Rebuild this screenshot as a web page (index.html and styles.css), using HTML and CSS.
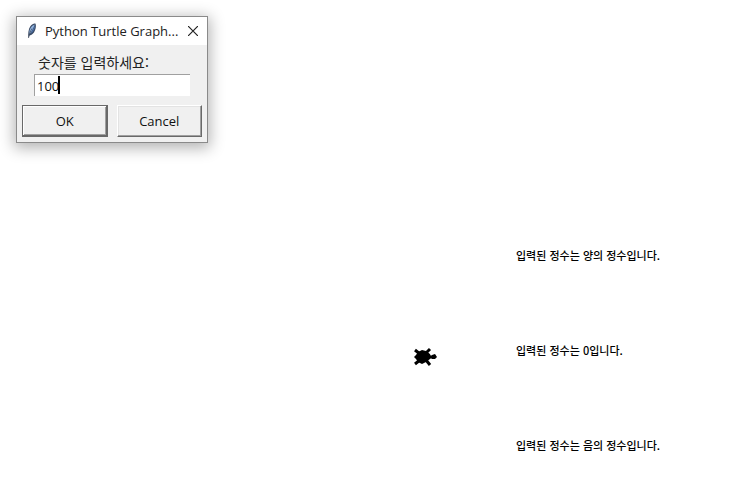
FILE: index.html
```html
<!DOCTYPE html>
<html lang="ko">
	<head>
		<meta charset="utf-8">
		<title>Python Turtle Graphics</title>
		<link rel="stylesheet" href="styles.css">
	</head>
	<body>
		<main class="screen">
			<form class="dialog" onsubmit="return false">
				<div class="titlebar">
					<svg class="feather" width="10" height="16" viewBox="0 0 10 16">
						<path d="M1.500 15 C0.800 11 1.300 6 3.500 3 C5 1 7.500 0 8.600 0.800 C9.400 3 8.700 7 7 9.500 C5.500 11.500 3.500 12.500 2.500 12.500 Z" fill="#3c4c66"/>
						<path d="M2.300 11.500 C2 7 3.500 3 7.800 1.500 C6.500 5 5 8 2.300 11.500 Z" fill="#8fb2df"/>
						<path d="M3.500 11 C6 9 8 6 8.200 2 C6.500 6 5 8.500 3.500 11 Z" fill="#4a76b8"/>
						<path d="M1.500 15 C2.200 11 3.500 8 5 5.500" fill="none" stroke="#3c4658" stroke-width="0.700"/>
					</svg>
					<span class="title">Python Turtle Graph...</span>
					<button type="button" class="close" aria-label="Close">
						<svg width="10" height="10" viewBox="0 0 10 10"><path d="M0 0 L10 10 M10 0 L0 10" stroke="#222" stroke-width="1.200"/></svg>
					</button>
				</div>
				<div class="field">
					<label for="num">숫자를 입력하세요:</label>
					<div class="entry">
						<input type="text" id="num" value="100">
						<i class="caret"></i>
					</div>
				</div>
				<div class="buttons">
					<button type="submit" class="btn default">OK</button>
					<button type="button" class="btn">Cancel</button>
				</div>
			</form>
			<!-- turtle canvas -->
			<svg class="turtle" width="24" height="20" viewBox="0 0 24 20">
				<g stroke="#000" stroke-width="3">
					<path d="M2 3 L7 7 M2 17 L7 13 M13 6 L17 2 M13 13 L17 18 M17 10 L21 10"/>
				</g>
				<path d="M3 8 L5 5 L9 3 L13 4 L17 7 L18 10 L17 12 L13 15 L9 17 L5 15 L3 12 L1 10 Z"/>
				<path d="M19 8 L22 7 L24 10 L22 12 L19 12 L18 10 Z"/>
			</svg>
			<p class="write positive">입력된 정수는 양의 정수입니다.</p>
			<p class="write zero">입력된 정수는 0입니다.</p>
			<p class="write negative">입력된 정수는 음의 정수입니다.</p>
		</main>
	</body>
</html>
```

FILE: styles.css
```css
*{margin:0;padding:0;box-sizing:border-box;}
body{background:#fff;color:#000;font-family:"Open Sans","Noto Sans CJK KR",sans-serif;font-size:13px;}
.screen{position:relative;min-height:100vh;padding:16px;overflow:hidden;}

.dialog{width:192px;border:1px solid #8a8a8a;background:#f0f0f0;box-shadow:0 3px 14px 2px rgba(0,0,0,.3);}
.titlebar{display:flex;align-items:center;height:28px;padding:0 9px 0 10px;background:#fff;}
.title{flex:1;margin-left:8px;white-space:nowrap;color:#222;}
.close{display:flex;border:0;background:none;}

.field{padding:6px 17px 0;}
.field label{display:block;padding:0 0 1px 4px;font-size:14px;line-height:22px;font-family:"Noto Sans CJK KR",sans-serif;color:#222;}
.entry{position:relative;}
.entry input{display:block;width:100%;height:22px;padding:0 2px;border:solid #a0a0a0;border-width:1px 0 0 1px;outline:0;background:#fff;color:#111;font:inherit;}
.caret{position:absolute;left:24px;top:2px;width:2px;height:18px;background:#000;}

.buttons{display:flex;gap:9px;padding:9px 5px 5px;}
.btn{flex:1;height:32px;background:#f0f0f0;color:#111;font:inherit;border:1px solid;border-color:#fff #696969 #696969 #fff;box-shadow:inset -1px -1px #a0a0a0,inset 1px 1px #e3e3e3;}
.default{border-color:#696969;box-shadow:inset -1px -1px #696969,inset 1px 1px #fff,inset -2px -2px #a0a0a0;}

.turtle{position:absolute;left:413px;top:347px;}
.write{position:absolute;left:516px;font:500 11px/16px "Noto Sans CJK KR",sans-serif;white-space:nowrap;}
.positive{top:247px;}
.zero{top:342px;}
.negative{top:437px;}
```
